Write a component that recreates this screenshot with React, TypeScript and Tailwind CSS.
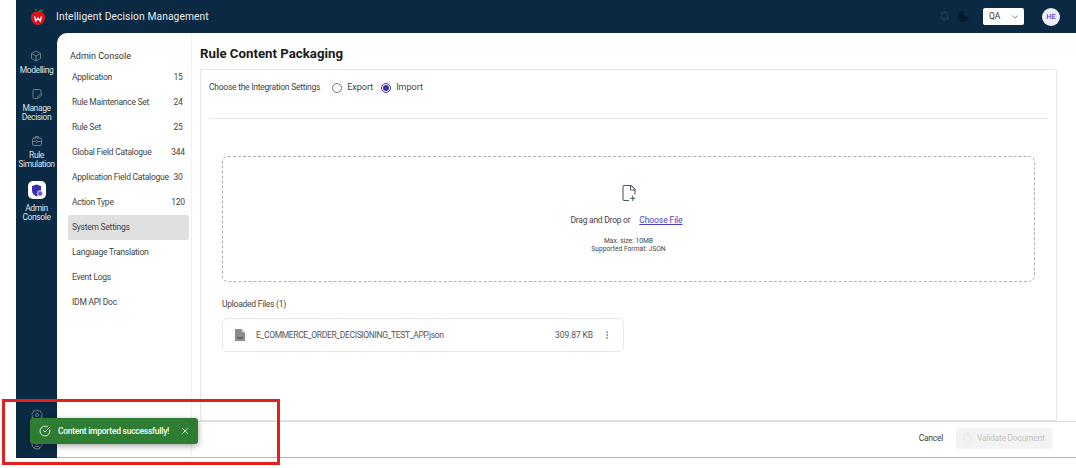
import { Bell, ChevronDown, CircleCheckBig, CircleUser, FileCheck, FilePlus2, Moon, MoreVertical, X } from 'lucide-react';

const navItems = [
  { label: 'Application', count: '15' },
  { label: 'Rule Maintenance Set', count: '24' },
  { label: 'Rule Set', count: '25' },
  { label: 'Global Field Catalogue', count: '344' },
  { label: 'Application Field Catalogue', count: '30' },
  { label: 'Action Type', count: '120' },
  { label: 'System Settings', active: true },
  { label: 'Language Translation' },
  { label: 'Event Logs' },
  { label: 'IDM API Doc' },
];

function CubeIcon() {
  return (
    <svg width="12" height="12" viewBox="0 0 24 24" fill="none" stroke="#7f8f9c" strokeWidth="1.6" strokeLinejoin="round">
      <path d="M12 2l9 5v10l-9 5-9-5V7z" />
      <path d="M3 7l9 5 9-5M12 12v10" />
    </svg>
  );
}

function NoteIcon() {
  return (
    <svg width="12" height="12" viewBox="0 0 24 24" fill="none" stroke="#7f8f9c" strokeWidth="1.6" strokeLinecap="round" strokeLinejoin="round">
      <path d="M20 11V6a3 3 0 0 0-3-3H7a3 3 0 0 0-3 3v12a3 3 0 0 0 3 3h4" />
      <path d="M13 20l1-3 6-6 2 2-6 6z" />
    </svg>
  );
}

function SimIcon() {
  return (
    <svg width="12" height="12" viewBox="0 0 24 24" fill="none" stroke="#7f8f9c" strokeWidth="1.6" strokeLinecap="round" strokeLinejoin="round">
      <rect x="3" y="6" width="18" height="15" rx="3" />
      <path d="M9 6V3h6v3M3 13h6M15 13h6M11 10l2 3-2 3" />
    </svg>
  );
}

function GearIcon() {
  return (
    <svg width="12" height="12" viewBox="0 0 24 24" fill="none" stroke="#7f8f9c" strokeWidth="1.6" strokeLinejoin="round">
      <path d="M12 2l3 2 4-.5 1 4 3 3-2 2.500 1 4-4 1-2 3.500-4-1.500-4 1.500-2-3.500-4-1 1-4-2-2.500 3-3 1-4 4 .5z" />
      <circle cx="12" cy="12" r="3" />
    </svg>
  );
}

function AdminIcon() {
  return (
    <svg width="12" height="13" viewBox="0 0 24 26">
      <path d="M11 1l9 3v9c0 6-4 10-9 12-5-2-9-6-9-12V4z" fill="#3d2fa8" />
      <circle cx="18" cy="19" r="5.500" fill="#6a5cd0" stroke="#ffffff" strokeWidth="1.500" />
    </svg>
  );
}

function AppLogo() {
  return (
    <svg width="16" height="18" viewBox="0 0 16 18">
      <path d="M8 4C7 2.500 6 1.500 4.500 1.500M8 4c1-1.500 3-2.500 5-2-.8 1.500-3 2.500-5 2z" fill="#3d7a2c" stroke="#3d7a2c" strokeWidth="0.700" />
      <path d="M8 4c3.500-1 7 .5 7 5.500S11.500 17 8 17 1 14.500 1 9.500 4.500 3 8 4z" fill="#d7141a" />
      <path d="M4.500 8.500l1.300 4.500 2.200-3 2.200 3 1.300-4.500" fill="none" stroke="#ffffff" strokeWidth="1.300" />
    </svg>
  );
}

function FileIcon() {
  return (
    <svg width="10" height="12" viewBox="0 0 10 12">
      <path d="M0 0h6.500L10 3.500V12H0z" fill="#8a8a8a" />
      <path d="M6.500 0v3.500H10z" fill="#c4c4c4" />
      <rect x="2" y="8" width="6" height="1.500" fill="#5f5f5f" />
    </svg>
  );
}

function RailItem({ icon, lines, active }: { icon: React.ReactNode; lines: string[]; active?: boolean }) {
  return (
    <div className="flex flex-col items-center">
      {active ? (
        <div className="flex h-[18px] w-[18px] items-center justify-center rounded-[5px] bg-white">{icon}</div>
      ) : (
        <div className="flex h-[14px] items-center">{icon}</div>
      )}
      <div className={`${active ? 'mt-[5px]' : 'mt-[3px]'} whitespace-nowrap text-center text-[8.500px] leading-[9px] tracking-[-0.4px] text-[#dbe3e9]`}>
        {lines.map((l) => (
          <div key={l}>{l}</div>
        ))}
      </div>
    </div>
  );
}

export default function App() {
  return (
    <div className="relative h-[468px] w-[1076px] overflow-hidden bg-white pl-4 font-['Roboto',sans-serif]">
      <div className="flex h-[458px] flex-col bg-[#0a2a43]">
        <header className="flex h-[33px] shrink-0 items-center">
          <div className="ml-[14px]">
            <AppLogo />
          </div>
          <div className="ml-[10px] text-[10.250px] tracking-[0.1px] text-[#e3e9ee]">Intelligent Decision Management</div>
          <div className="ml-auto flex items-center">
            <Bell size={11} className="text-[#2f4a60]" />
            <Moon size={13} className="ml-[7px] text-[#04182a]" fill="#04182a" />
            <div className="ml-[13px] flex h-[17px] w-[41px] items-center justify-between rounded-[2px] bg-white pl-[6px] pr-[4px] text-[8.500px] text-[#333333]">
              QA
              <ChevronDown size={10} className="text-[#777777]" />
            </div>
            <div className="ml-[18px] mr-[16px] flex h-[18px] w-[18px] items-center justify-center rounded-full bg-[#eeeefc] text-[7.500px] font-medium text-[#5b4bd0]">
              HE
            </div>
          </div>
        </header>

        <div className="flex min-h-0 flex-1">
          <nav className="flex w-[41px] shrink-0 flex-col items-center pt-[16px]">
            <RailItem icon={<CubeIcon />} lines={['Modelling']} />
            <div className="mt-[12px]">
              <RailItem icon={<NoteIcon />} lines={['Manage', 'Decision']} />
            </div>
            <div className="mt-[12px]">
              <RailItem icon={<SimIcon />} lines={['Rule', 'Simulation']} />
            </div>
            <div className="mt-[12px]">
              <RailItem active icon={<AdminIcon />} lines={['Admin', 'Console']} />
            </div>
            <div className="mt-auto mb-[8px] flex flex-col items-center gap-[17px]">
              <GearIcon />
              <CircleUser size={12} className="text-[#7f8f9c]" />
            </div>
          </nav>

          <main className="flex min-w-0 flex-1 rounded-tl-[10px] border-b border-[#b5b5b5] bg-white">
            <aside className="w-[135px] shrink-0 border-r border-[#f0f0f0] pt-[16px]">
              <div className="pl-[13px] text-[9px] leading-[14px] text-[#333333]">Admin Console</div>
              <ul className="mt-[2px] pl-[11px] pr-[2px]">
                {navItems.map((item) => (
                  <li
                    key={item.label}
                    className={`flex h-[25px] items-center justify-between whitespace-nowrap rounded-[2px] pl-[4px] pr-[2px] text-[8.500px] tracking-[-0.25px] text-[#444444] ${item.active ? 'bg-[#e0e0e0]' : ''}`}
                  >
                    <span>{item.label}</span>
                    {item.count && <span className="w-[18px] text-center">{item.count}</span>}
                  </li>
                ))}
              </ul>
            </aside>

            <section className="flex min-w-0 flex-1 flex-col">
              <div className="flex min-h-0 flex-1 flex-col pl-[8px] pr-[19px]">
                <h1 className="h-[36px] shrink-0 pt-[11px] text-[13.250px] font-bold leading-[20px] text-[#1a1a1a]">Rule Content Packaging</h1>
                <div className="flex min-h-0 flex-1 flex-col rounded-t-[2px] border border-[#e4e4e4] px-[8px]">
                  <div className="flex h-[35px] shrink-0 items-center text-[8.500px] tracking-[-0.25px] text-[#444444]">
                    <span>Choose the Integration Settings</span>
                    <span className="ml-[12px] h-[10px] w-[10px] rounded-full border border-[#777777]" />
                    <span className="ml-[5px] text-[9px] tracking-normal">Export</span>
                    <span className="ml-[8px] flex h-[10px] w-[10px] items-center justify-center rounded-full border border-[#3d35a8]">
                      <span className="h-[6px] w-[6px] rounded-full bg-[#3d35a8]" />
                    </span>
                    <span className="ml-[5px] text-[9px] tracking-normal">Import</span>
                  </div>
                  <div className="mt-[13px] h-px shrink-0 bg-[#e6e6e6]" />

                  <div className="mx-[13px] mt-[37px] flex h-[126px] shrink-0 flex-col items-center rounded-[6px] border border-dashed border-[#b0b0b0] pt-[27px]">
                    <FilePlus2 size={18} strokeWidth={1.400} className="text-[#4a5560]" />
                    <div className="mr-[4px] mt-[12px] flex items-center text-[8.500px] leading-[12px] tracking-[-0.25px] text-[#444444]">
                      <span>Drag and Drop or</span>
                      <span className="ml-[9px] tracking-[-0.1px] text-[#4a3fc4] underline">Choose File</span>
                    </div>
                    <div className="mt-[11px] text-center text-[6.700px] leading-[8px] text-[#444444]">
                      <div>Max. size: 10MB</div>
                      <div>Supported Format: JSON</div>
                    </div>
                  </div>

                  <div className="ml-[13px] mt-[16px] text-[8.500px] leading-[12px] tracking-[-0.25px] text-[#444444]">Uploaded Files (1)</div>
                  <div className="ml-[13px] mt-[8px] flex h-[34px] w-[402px] shrink-0 items-center rounded-[5px] border border-[#e8e8e8] pl-[12px] pr-[11px] text-[8.500px] text-[#555555]">
                    <FileIcon />
                    <span className="ml-[11px] tracking-[-0.35px]">E_COMMERCE_ORDER_DECISIONING_TEST_APP.json</span>
                    <span className="ml-auto tracking-[-0.1px]">309.87 KB</span>
                    <MoreVertical size={10} className="ml-[9px] text-[#777777]" />
                  </div>
                </div>
              </div>
              <footer className="flex h-[36px] shrink-0 items-center justify-end border-t border-[#dcdcdc] pb-[2px] pr-[23px] text-[8.500px] tracking-[-0.25px]">
                <span className="text-[#444444]">Cancel</span>
                <button className="ml-[13px] flex h-[21px] w-[97px] items-center rounded-[3px] bg-[#f3f3f3] pl-[6px] text-[#c4c4c4]">
                  <FileCheck size={11} strokeWidth={1.400} className="text-[#e6e6e6]" />
                  <span className="ml-[4px]">Validate Document</span>
                </button>
              </footer>
            </section>
          </main>
        </div>
      </div>

      <div className="absolute left-[30px] top-[418px] flex h-[26px] w-[168px] items-center rounded-[3px] bg-[#2e7d32] pl-[9px] shadow-[0_2px_6px_rgba(0,0,0,0.35)]">
        <CircleCheckBig size={12} strokeWidth={1.600} className="text-white" />
        <span className="ml-[7px] text-[8.500px] font-medium tracking-[-0.25px] text-white">Content imported successfully!</span>
        <X size={10} className="absolute right-[8px] top-[8px] text-white" />
      </div>

      <div className="pointer-events-none absolute left-[2px] top-[399px] h-[66px] w-[278px] border-[3px] border-[#e3201f]" />
    </div>
  );
}
